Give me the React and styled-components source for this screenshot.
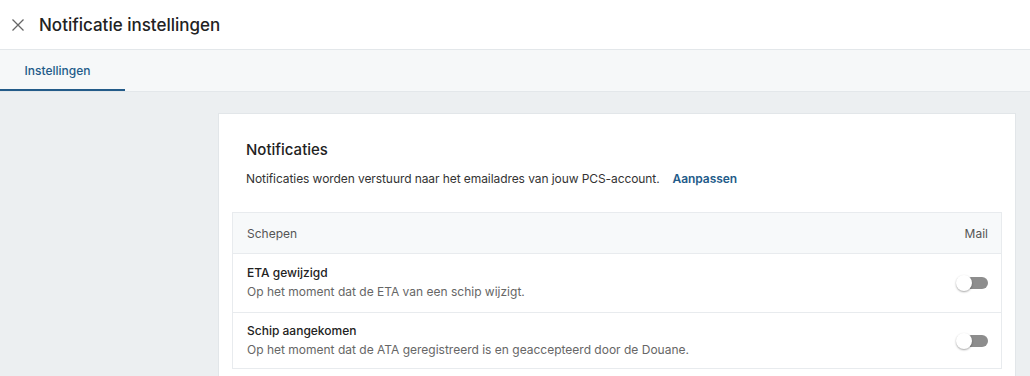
import React from "react";
import styled, { createGlobalStyle } from "styled-components";

const Global = createGlobalStyle`
  html, body { margin: 0; padding: 0; }
  body {
    font-family: Inter, "Noto Sans", sans-serif;
    background: #eceff1;
    color: #222;
    width: 1030px;
    height: 376px;
    overflow: hidden;
  }
`;

const Page = styled.div`
  display: flex;
  flex-direction: column;
  min-height: 376px;
`;

const Header = styled.header`
  height: 49px;
  display: flex;
  align-items: center;
  gap: 14px;
  padding: 0 11px;
  background: #fff;
  border-bottom: 1px solid #e3e7ea;
`;

const CloseButton = styled.button`
  border: 0;
  background: none;
  padding: 0;
  width: 14px;
  height: 14px;
  display: flex;
  cursor: pointer;
`;

const Title = styled.h1`
  margin: 0;
  font-size: 17px;
  font-weight: 500;
  color: #222;
`;

const TabBar = styled.nav`
  height: 41px;
  display: flex;
  background: #f6f8f9;
  border-bottom: 1px solid #e3e7ea;
`;

const Tab = styled.div`
  width: 125px;
  display: flex;
  align-items: center;
  justify-content: center;
  font-size: 12px;
  font-weight: 500;
  color: ${(p) => (p.$active ? "#235b89" : "#555")};
  border-bottom: 2px solid ${(p) => (p.$active ? "#235b89" : "transparent")};
  box-sizing: border-box;
  padding: 1px 10px 0 0;
`;

const Content = styled.main`
  padding: 21px 14px 0 218px;
`;

const Card = styled.section`
  background: #fff;
  border: 1px solid #e2e6e9;
  border-bottom: 0;
  padding: 26px 13px 20px 13px;
`;

const CardTitle = styled.h2`
  margin: 0 0 0 14px;
  font-size: 15px;
  font-weight: 500;
  color: #222;
`;

const Intro = styled.p`
  margin: 12px 0 26px 14px;
  font-size: 12px;
  line-height: 15px;
  letter-spacing: -0.08px;
  color: #333;
`;

const Link = styled.a`
  color: #235b89;
  font-weight: 600;
  margin-left: 13px;
  text-decoration: none;
`;

const Table = styled.div`
  border: 1px solid #e8ebee;
`;

const HeadRow = styled.div`
  height: 40px;
  display: flex;
  align-items: center;
  justify-content: space-between;
  padding: 0 13px 0 14px;
  background: #f7f9fa;
  border-bottom: 1px solid #e8ebee;
  font-size: 12px;
  color: #555;
`;

const Row = styled.div`
  height: ${(p) => p.$h}px;
  display: flex;
  align-items: center;
  justify-content: space-between;
  padding: 0 13px 0 14px;
  border-bottom: ${(p) => (p.$last ? "0" : "1px solid #e8ebee")};
`;

const RowText = styled.div`
  display: flex;
  flex-direction: column;
  gap: 4px;
  line-height: 15px;
  margin-top: -2px;
`;

const RowTitle = styled.div`
  font-size: 12px;
  font-weight: 500;
  color: #222;
`;

const RowDesc = styled.div`
  font-size: 12px;
  color: #666;
`;

const Toggle = styled.span`
  position: relative;
  width: 32px;
  height: 16px;
  display: inline-block;
  &::before {
    content: "";
    position: absolute;
    left: 6px;
    right: 0;
    top: 2px;
    height: 12px;
    border-radius: 6px;
    background: #8d8d8d;
  }
  &::after {
    content: "";
    position: absolute;
    left: 0;
    top: 0;
    width: 16px;
    height: 16px;
    border-radius: 50%;
    background: #fff;
    box-shadow: 0 1px 2px rgba(0, 0, 0, 0.35);
  }
`;

const rows = [
  { title: "ETA gewijzigd", desc: "Op het moment dat de ETA van een schip wijzigt.", h: 58 },
  {
    title: "Schip aangekomen",
    desc: "Op het moment dat de ATA geregistreerd is en geaccepteerd door de Douane.",
    h: 55,
  },
];

export default function App() {
  return (
    <>
      <Global />
      <Page>
        <Header>
          <CloseButton aria-label="Sluiten">
            <svg width="14" height="14" viewBox="0 0 14 14">
              <path d="M1.5 1.5 L12.5 12.5 M12.5 1.5 L1.5 12.5" stroke="#666" strokeWidth="1.3" fill="none" />
            </svg>
          </CloseButton>
          <Title>Notificatie instellingen</Title>
        </Header>
        <TabBar>
          <Tab $active>Instellingen</Tab>
        </TabBar>
        <Content>
          <Card>
            <CardTitle>Notificaties</CardTitle>
            <Intro>
              Notificaties worden verstuurd naar het emailadres van jouw PCS-account.
              <Link href="#">Aanpassen</Link>
            </Intro>
            <Table>
              <HeadRow>
                <span>Schepen</span>
                <span>Mail</span>
              </HeadRow>
              {rows.map((r, i) => (
                <Row key={r.title} $h={r.h} $last={i === rows.length - 1}>
                  <RowText>
                    <RowTitle>{r.title}</RowTitle>
                    <RowDesc>{r.desc}</RowDesc>
                  </RowText>
                  <Toggle />
                </Row>
              ))}
            </Table>
          </Card>
        </Content>
      </Page>
    </>
  );
}
